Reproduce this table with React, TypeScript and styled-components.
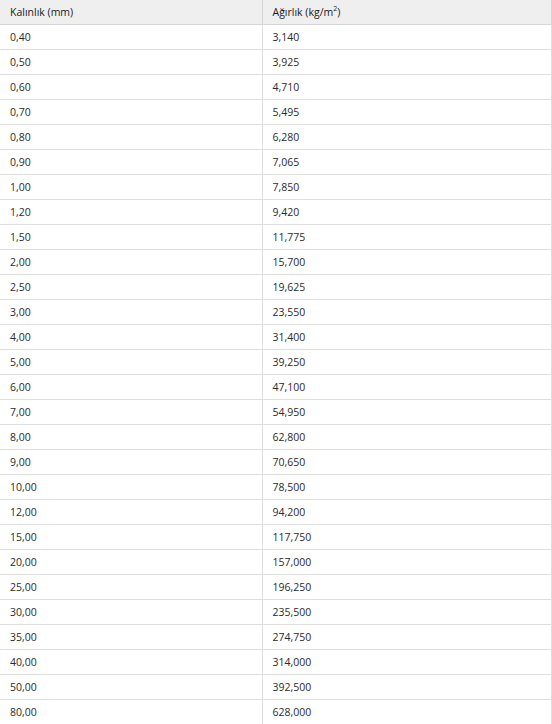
import { FC } from 'react';
import styled, { createGlobalStyle } from 'styled-components';

const GlobalStyle = createGlobalStyle`
  html, body {
    margin: 0;
    padding: 0;
    background: #ffffff;
  }
`;

const Table = styled.table`
  width: 552px;
  border-collapse: collapse;
  table-layout: fixed;
  font-family: 'Open Sans', 'Noto Sans', sans-serif;
  font-size: 10.5px;
  color: #2b2b2b;

  col.first {
    width: 262px;
  }
`;

const HeadCell = styled.th`
  height: 24px;
  padding: 0 10px;
  text-align: left;
  font-weight: 400;
  color: #1a1a1a;
  background: #efefef;
  border-bottom: 1px solid #d5d5d5;
  border-right: 1px solid #d5d5d5;

  sup {
    font-size: 7px;
    vertical-align: 5px;
    line-height: 0;
  }
`;

const Cell = styled.td`
  height: 24px;
  padding: 0 10px;
  border-bottom: 1px solid #dedede;
  border-right: 1px solid #dedede;
`;

const rows: [string, string][] = [
  ['0,40', '3,140'],
  ['0,50', '3,925'],
  ['0,60', '4,710'],
  ['0,70', '5,495'],
  ['0,80', '6,280'],
  ['0,90', '7,065'],
  ['1,00', '7,850'],
  ['1,20', '9,420'],
  ['1,50', '11,775'],
  ['2,00', '15,700'],
  ['2,50', '19,625'],
  ['3,00', '23,550'],
  ['4,00', '31,400'],
  ['5,00', '39,250'],
  ['6,00', '47,100'],
  ['7,00', '54,950'],
  ['8,00', '62,800'],
  ['9,00', '70,650'],
  ['10,00', '78,500'],
  ['12,00', '94,200'],
  ['15,00', '117,750'],
  ['20,00', '157,000'],
  ['25,00', '196,250'],
  ['30,00', '235,500'],
  ['35,00', '274,750'],
  ['40,00', '314,000'],
  ['50,00', '392,500'],
  ['80,00', '628,000'],
];

const App: FC = () => {
  return (
    <>
      <GlobalStyle />
      <Table>
        <colgroup>
          <col className='first' />
          <col />
        </colgroup>
        <thead>
          <tr>
            <HeadCell>Kalınlık (mm)</HeadCell>
            <HeadCell>Ağırlık (kg/m<sup>2</sup>)</HeadCell>
          </tr>
        </thead>
        <tbody>
          {rows.map(([thickness, weight]) => (
            <tr key={thickness}>
              <Cell>{thickness}</Cell>
              <Cell>{weight}</Cell>
            </tr>
          ))}
        </tbody>
      </Table>
    </>
  );
};

export default App;
